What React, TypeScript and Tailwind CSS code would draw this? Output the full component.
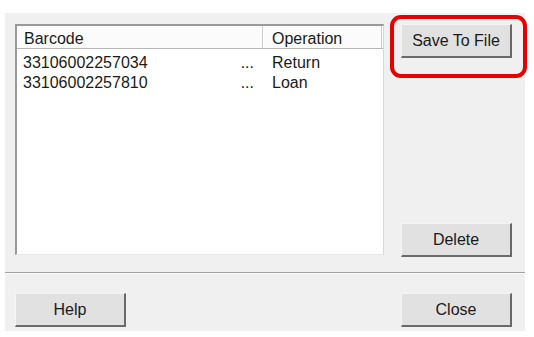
const rows = [
  { barcode: "33106002257034", op: "Return" },
  { barcode: "33106002257810", op: "Loan" },
];

function WinButton({ label }: { label: string }) {
  return (
    <button className="w-[111px] h-[34px] bg-[#e1e1e1] border-t border-l border-t-[#f4f4f4] border-l-[#f4f4f4] border-b-2 border-r-2 border-b-[#6a6a6a] border-r-[#6a6a6a] text-[16px] text-[#1a1a1a] leading-none">
      {label}
    </button>
  );
}

export default function App() {
  return (
    <div
      className="relative w-[534px] h-[337px] bg-white pt-[13px] pl-[5px]"
      style={{ fontFamily: '"Liberation Sans", Arial, sans-serif' }}
    >
      <div className="w-[520px] h-[318px] bg-[#f0f0f0] flex flex-col">
        {/* list + side buttons */}
        <div className="flex pl-[10px] pt-[11px] gap-[17px]">
          <div className="w-[369px] h-[231px] bg-white border-l-2 border-t-2 border-l-[#9a9a9a] border-t-[#9a9a9a] border-r border-b border-r-[#d8d8d8] border-b-[#e8e8e8]">
            <div className="flex h-[23px] bg-[#fbfbfb] border-b border-[#b8b8b8] text-[16px] text-[#1a1a1a] leading-[18px] pt-[4px]">
              <div className="w-[246px] pl-[7px] border-r border-[#cfcfcf] -mt-[4px] pt-[4px]">Barcode</div>
              <div className="w-[119px] pl-[9px] border-r border-[#cfcfcf] -mt-[4px] pt-[4px]">Operation</div>
            </div>
            <div className="pt-[4px] text-[16px] text-[#1a1a1a] leading-[20px]">
              {rows.map((r) => (
                <div key={r.barcode} className="flex h-[20px]">
                  <div className="w-[246px] pl-[6px] flex justify-between pr-[9px]">
                    <span>{r.barcode}</span>
                    <span>...</span>
                  </div>
                  <div className="pl-[9px]">{r.op}</div>
                </div>
              ))}
            </div>
          </div>
          <div className="flex flex-col justify-between h-[233px]">
            <WinButton label="Save To File" />
            <WinButton label="Delete" />
          </div>
        </div>

        {/* separator */}
        <div className="mt-[15px] border-t border-[#a0a0a0] border-b border-b-white" />

        {/* bottom buttons */}
        <div className="flex justify-between pl-[10px] pr-[13px] mt-[19px]">
          <WinButton label="Help" />
          <WinButton label="Close" />
        </div>
      </div>

      {/* red highlight annotation */}
      <div className="absolute left-[390px] top-[15px] w-[137px] h-[63px] border-[4px] border-[#e60000] rounded-[11px]" />
    </div>
  );
}
